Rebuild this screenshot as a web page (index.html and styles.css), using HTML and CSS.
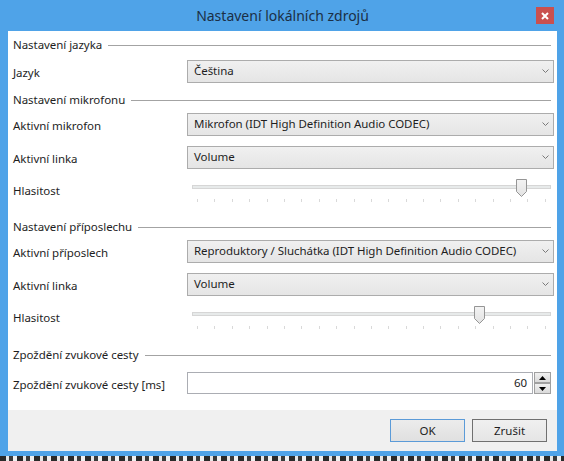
FILE: index.html
```html
<!DOCTYPE html>
<html lang="cs">
<head>
<meta charset="utf-8">
<title>Nastavení lokálních zdrojů</title>
<link rel="stylesheet" href="styles.css">
</head>
<body>
<div class="window">
  <div class="titlebar">
    <span></span>
    <div class="title">Nastavení lokálních zdrojů</div>
    <div class="close">
      <svg width="8" height="8" viewBox="0 0 8 8"><path d="M1 1 L7 7 M7 1 L1 7" stroke="#fff" stroke-width="2"/></svg>
    </div>
  </div>
  <div class="client">
    <div class="content">
      <div class="section first"><span>Nastavení jazyka</span><i class="rule"></i></div>
      <div class="row after-section"><span class="label">Jazyk</span>
        <div class="combo"><span>Čeština</span><svg class="chev" width="7" height="5" viewBox="0 0 7 5"><path d="M0.5 0.5 L3.5 3.5 L6.5 0.5" fill="none" stroke="#7a7a7a"/></svg></div>
      </div>

      <div class="section"><span>Nastavení mikrofonu</span><i class="rule"></i></div>
      <div class="row after-section"><span class="label">Aktivní mikrofon</span>
        <div class="combo"><span>Mikrofon (IDT High Definition Audio CODEC)</span><svg class="chev" width="7" height="5" viewBox="0 0 7 5"><path d="M0.5 0.5 L3.5 3.5 L6.5 0.5" fill="none" stroke="#7a7a7a"/></svg></div>
      </div>
      <div class="row"><span class="label">Aktivní linka</span>
        <div class="combo"><span>Volume</span><svg class="chev" width="7" height="5" viewBox="0 0 7 5"><path d="M0.5 0.5 L3.5 3.5 L6.5 0.5" fill="none" stroke="#7a7a7a"/></svg></div>
      </div>
      <div class="row slider-row"><span class="label">Hlasitost</span>
        <div class="slider">
          <div class="track"></div>
          <div class="thumb" style="left: calc((100% - 11px) * 0.93)">
            <svg width="11" height="18" viewBox="0 0 11 18"><defs><linearGradient id="tg1" x1="0" y1="0" x2="0" y2="1"><stop offset="0" stop-color="#f3f3f3"/><stop offset="1" stop-color="#e2e2e2"/></linearGradient></defs><path d="M0.5 0.5 H10.5 V12.5 L5.5 17.5 L0.5 12.5 Z" fill="url(#tg1)" stroke="#959595"/></svg>
          </div>
          <div class="ticks"><i></i><i></i><i></i><i></i><i></i><i></i><i></i><i></i><i></i><i></i><i></i><i></i><i></i><i></i><i></i><i></i><i></i><i></i><i></i><i></i><i></i></div>
        </div>
      </div>

      <div class="section sec-after-slider"><span>Nastavení příposlechu</span><i class="rule"></i></div>
      <div class="row after-section"><span class="label">Aktivní příposlech</span>
        <div class="combo"><span>Reproduktory / Sluchátka (IDT High Definition Audio CODEC)</span><svg class="chev" width="7" height="5" viewBox="0 0 7 5"><path d="M0.5 0.5 L3.5 3.5 L6.5 0.5" fill="none" stroke="#7a7a7a"/></svg></div>
      </div>
      <div class="row"><span class="label">Aktivní linka</span>
        <div class="combo"><span>Volume</span><svg class="chev" width="7" height="5" viewBox="0 0 7 5"><path d="M0.5 0.5 L3.5 3.5 L6.5 0.5" fill="none" stroke="#7a7a7a"/></svg></div>
      </div>
      <div class="row slider-row"><span class="label">Hlasitost</span>
        <div class="slider">
          <div class="track"></div>
          <div class="thumb" style="left: calc((100% - 11px) * 0.81)">
            <svg width="11" height="18" viewBox="0 0 11 18"><defs><linearGradient id="tg2" x1="0" y1="0" x2="0" y2="1"><stop offset="0" stop-color="#f3f3f3"/><stop offset="1" stop-color="#e2e2e2"/></linearGradient></defs><path d="M0.5 0.5 H10.5 V12.5 L5.5 17.5 L0.5 12.5 Z" fill="url(#tg2)" stroke="#959595"/></svg>
          </div>
          <div class="ticks"><i></i><i></i><i></i><i></i><i></i><i></i><i></i><i></i><i></i><i></i><i></i><i></i><i></i><i></i><i></i><i></i><i></i><i></i><i></i><i></i><i></i></div>
        </div>
      </div>

      <div class="section sec-after-slider2"><span>Zpoždění zvukové cesty</span><i class="rule"></i></div>
      <div class="row tb-row"><span class="label">Zpoždění zvukové cesty [ms]</span>
        <div class="numeric">
          <div class="tb">60</div>
          <div class="spin">
            <div class="sbtn"><svg width="7" height="4" viewBox="0 0 7 4"><path d="M0 4 L3.5 0 L7 4 Z" fill="#000"/></svg></div>
            <div class="sbtn"><svg width="7" height="4" viewBox="0 0 7 4"><path d="M0 0 L3.5 4 L7 0 Z" fill="#000"/></svg></div>
          </div>
        </div>
      </div>
    </div>
    <div class="footer">
      <button class="btn default">OK</button>
      <button class="btn">Zrušit</button>
    </div>
  </div>
</div>
<div class="desk"></div>
</body>
</html>
```

FILE: styles.css
```css
html, body {
  margin: 0;
  padding: 0;
}
body {
  width: 564px;
  height: 461px;
  overflow: hidden;
  font-family: "Segoe UI", "Noto Sans", "Open Sans", sans-serif;
  font-size: 11.5px;
  letter-spacing: -0.05px;
  color: #1e1e1e;
  background: #d8d8d8;
}
.window {
  height: 456px;
  box-sizing: border-box;
  background: #4fa3e8;
  padding: 0 7px 5px 8px;
  display: flex;
  flex-direction: column;
}
.titlebar {
  height: 31px;
  flex: none;
  display: grid;
  grid-template-columns: 1fr auto 1fr;
  align-items: start;
}
.title {
  font-size: 14px;
  letter-spacing: 0;
  line-height: 20px;
  margin-top: 6px;
  color: #1b2f45;
  white-space: nowrap;
}
.close {
  justify-self: end;
  width: 18px;
  height: 17px;
  margin-top: 7px;
  margin-right: 3px;
  background: #c9504f;
  display: flex;
  align-items: center;
  justify-content: center;
}
.client {
  flex: 1;
  background: #fff;
  display: flex;
  flex-direction: column;
}
.content {
  flex: 1;
  padding: 5px 3px 0 5px;
  display: flex;
  flex-direction: column;
}
.section {
  height: 18px;
  display: flex;
  align-items: center;
  gap: 6px;
  margin-top: 8px;
  white-space: nowrap;
  line-height: 16px;
}
.section.first { margin-top: 0; }
.section.sec-after-slider { margin-top: 13px; }
.section.sec-after-slider2 { margin-top: 14px; }
.rule {
  flex: 1;
  height: 1px;
  background: #a3a3a3;
  margin-right: 3px;
  margin-top: 1px;
}
.row {
  display: grid;
  grid-template-columns: 174px 1fr;
  height: 23px;
  align-items: center;
  margin-top: 10px;
}
.row.after-section { margin-top: 4px; }
.section.first + .row { margin-top: 6px; }
.label {
  line-height: 16px;
  padding-top: 3px;
  white-space: nowrap;
}
.combo {
  height: 23px;
  box-sizing: border-box;
  border: 1px solid #acacac;
  background: linear-gradient(#f0f0f0, #e5e5e5);
  display: flex;
  align-items: center;
  justify-content: space-between;
  padding: 0 4px 0 6px;
  white-space: nowrap;
  line-height: 16px;
}
.combo span { padding-bottom: 1px; }
.chev { flex: none; }
.slider-row {
  height: 26px;
  align-items: start;
}
.slider-row .label { padding-top: 4px; }
.slider {
  position: relative;
  height: 26px;
  margin: 0 3px 0 5px;
}
.track {
  margin-top: 6px;
  height: 4px;
  box-sizing: border-box;
  border: 1px solid #d6d6d6;
  background: #e7eaea;
}
.thumb {
  position: absolute;
  top: 0;
  width: 11px;
  height: 18px;
}
.thumb svg { display: block; }
.ticks {
  margin-top: 10px;
  padding: 0 5px;
  height: 3px;
  display: flex;
  justify-content: space-between;
}
.ticks i {
  width: 1px;
  height: 3px;
  background: #d9d9d9;
}
.tb-row {
  height: 22px;
  margin-top: 8px;
}
.numeric {
  display: flex;
  height: 22px;
  padding-right: 3px;
}
.tb {
  flex: 1;
  box-sizing: border-box;
  border: 1px solid #abadb3;
  background: #fff;
  text-align: right;
  padding-right: 5px;
  line-height: 20px;
}
.spin {
  width: 17px;
  display: flex;
  flex-direction: column;
  margin-left: 1px;
}
.sbtn {
  flex: 1;
  box-sizing: border-box;
  border: 1px solid #a0a0a0;
  background: linear-gradient(#f0f0f0, #dadada);
  display: flex;
  align-items: center;
  justify-content: center;
}
.footer {
  height: 41px;
  flex: none;
  background: #f0f0f0;
  display: flex;
  justify-content: flex-end;
  align-items: center;
  gap: 7px;
  padding-right: 10px;
}
.btn {
  width: 75px;
  height: 23px;
  box-sizing: border-box;
  border: 1px solid #707070;
  background: linear-gradient(#f0f0f0, #e5e5e5);
  font-family: inherit;
  font-size: 11.5px;
  color: #1e1e1e;
  padding: 0;
  margin: 0;
}
.btn.default {
  border-color: #5b9bd8;
  background: linear-gradient(#ececec, #e0e0e0);
}
.desk {
  height: 5px;
  background: repeating-linear-gradient(90deg, #2a2a2a 0 6px, #e6e6e6 6px 9px, #3a3a3a 9px 13px, #f0f0f0 13px 17px);
}
```
